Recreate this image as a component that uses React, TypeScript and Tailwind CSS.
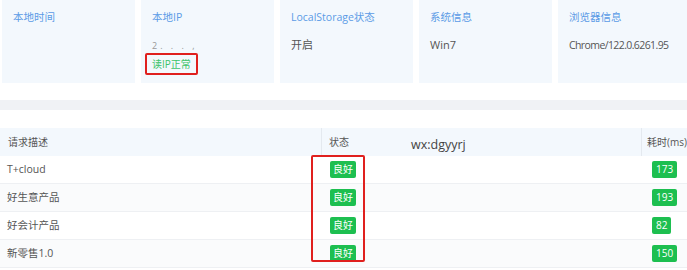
const cards = [
  { title: '本地时间', value: '' },
  { title: '本地IP', value: '2. . . ,', ip: true },
  { title: 'LocalStorage状态', value: '开启' },
  { title: '系统信息', value: 'Win7' },
  { title: '浏览器信息', value: 'Chrome/122.0.6261.95', narrow: true },
]

const rows = [
  { name: 'T+cloud', ms: 173 },
  { name: '好生意产品', ms: 193 },
  { name: '好会计产品', ms: 82 },
  { name: '新零售1.0', ms: 150 },
]

export default function App() {
  return (
    <div
      className="w-[687px] h-[270px] overflow-hidden bg-white text-[10px] text-[#555]"
      style={{ fontFamily: '"Open Sans", "Noto Sans CJK SC", sans-serif' }}
    >
      {/* info cards */}
      <div className="flex gap-[6px] pl-[2px] h-[83px]">
        {cards.map((c) => (
          <div key={c.title} className="w-[133px] shrink-0 bg-[#f3f8fd] px-[11px] pt-[9px]">
            <div className="text-[#5b9be6] text-[10.5px] leading-[16px]">{c.title}</div>
            <div
              className={`mt-[12px] leading-[16px] h-[16px] text-[#555] whitespace-nowrap ${c.narrow ? 'text-[10.5px] tracking-[-0.6px]' : 'text-[11px]'}`}
            >
              {c.ip ? <span className="text-[#999] text-[9px] tracking-[3px]">2. . . ,</span> : c.value}
            </div>
            {c.ip && (
              <div className="-ml-[7px] inline-block border-2 border-[#e0201e] rounded-[2px] px-[5px] leading-[18px] text-[#3cc36a] text-[10px]">
                读IP正常
              </div>
            )}
          </div>
        ))}
      </div>

      <div className="h-[17px]" />
      <div className="h-[10px] bg-[#f0f2f5]" />
      <div className="h-[18px]" />

      {/* table */}
      <div className="relative">
        <div className="flex h-[28px] items-center bg-[#f3f8fd] text-[#555]">
          <div className="w-[323px] pl-[8px]">请求描述</div>
          <div className="w-[322px] h-full flex items-center border-l border-[#e4e9ef] pl-[7px]">
            <span>状态</span>
            <span className="ml-[62px] mt-[6px] text-[12.5px] text-[#444]">wx:dgyyrj</span>
          </div>
          <div className="flex-1 h-full flex items-center border-l border-[#e4e9ef] pl-[5px] whitespace-nowrap">
            耗时(ms)
          </div>
        </div>
        {rows.map((r, i) => (
          <div
            key={r.name}
            className={`flex h-[28px] items-center border-b border-[#eef0f3] ${i % 2 === 1 ? 'bg-[#fafbfc]' : 'bg-white'}`}
          >
            <div className="w-[323px] pl-[7px] text-[10.5px] text-[#555]">{r.name}</div>
            <div className="w-[322px] pl-[7px]">
              <span className="inline-block bg-[#1dbf50] text-white text-[10px] leading-[17px] px-[3px] rounded-[2px]">良好</span>
            </div>
            <div className="flex-1 pl-[7px]">
              <span className="inline-block bg-[#1dbf50] text-white text-[10px] leading-[17px] px-[4px] rounded-[2px]">{r.ms}</span>
            </div>
          </div>
        ))}
        <div className="absolute left-[311px] top-[27px] w-[54px] h-[107px] border-2 border-[#e0201e] rounded-[2px]" />
      </div>
    </div>
  )
}
